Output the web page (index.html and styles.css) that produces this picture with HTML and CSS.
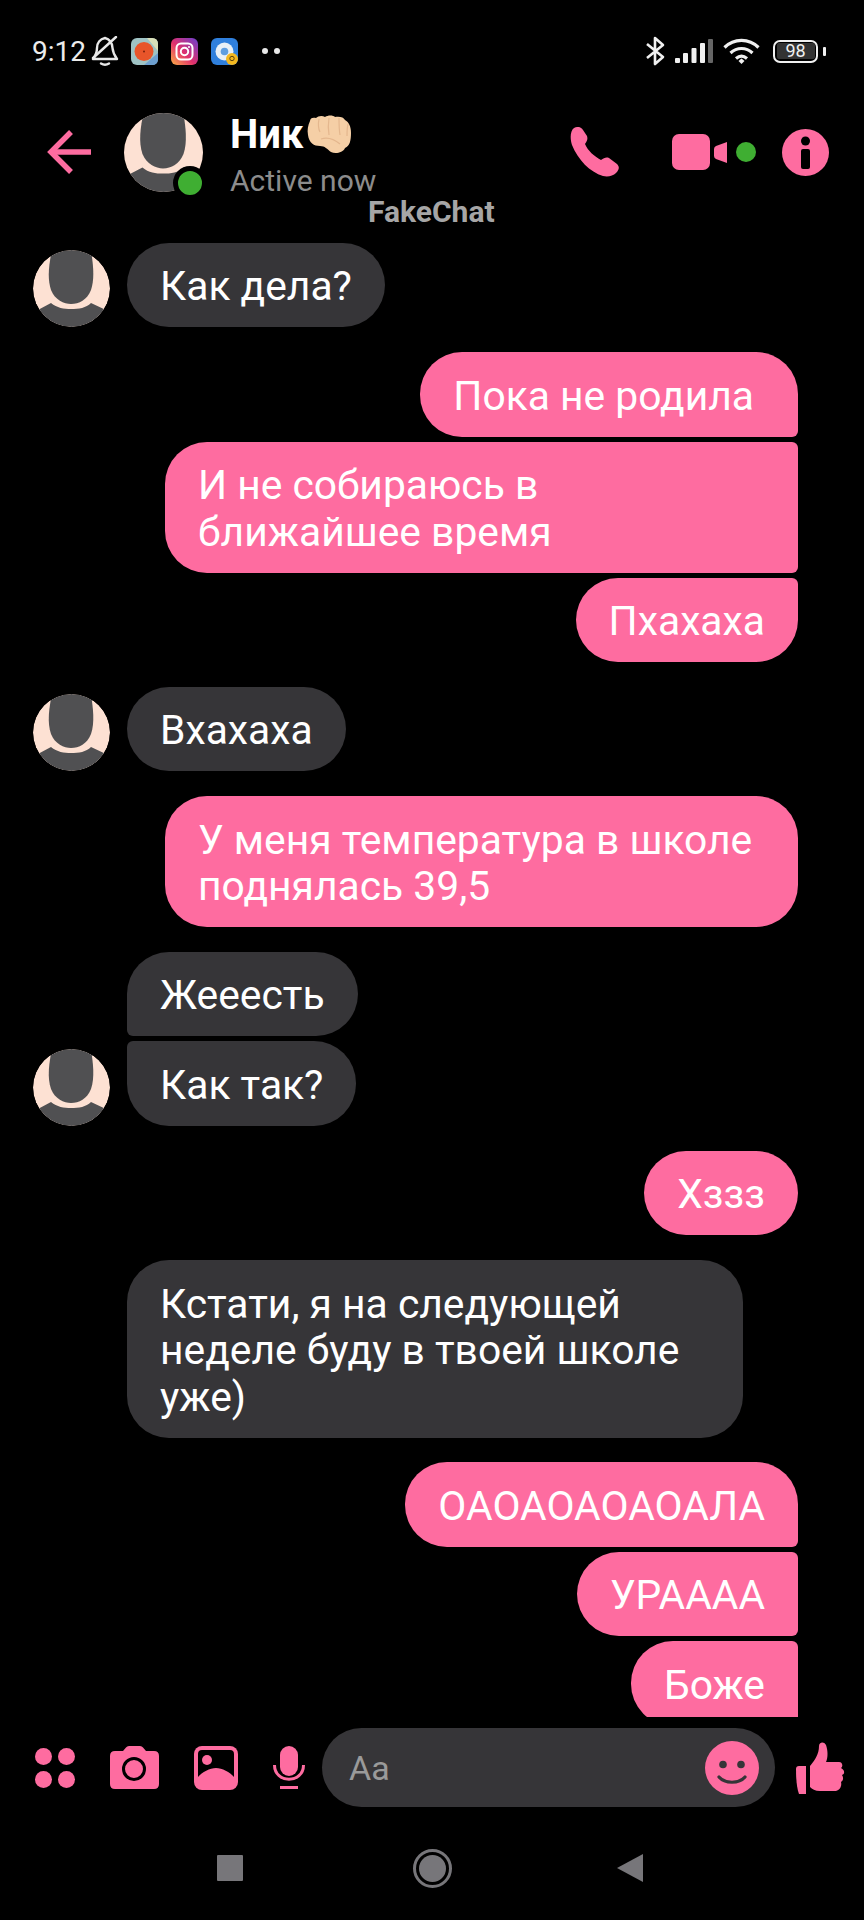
FILE: index.html
```html
<!DOCTYPE html>
<html lang="ru">
<head>
    <meta charset="UTF-8">
    <meta name="viewport" content="width=device-width, initial-scale=1.0">
    <title>FakeChat</title>
    <link rel="stylesheet" href="styles.css">
</head>
<body>
    <svg class="defs" width="0" height="0">
        <defs>
            <clipPath id="faceClip"><circle cx="38.5" cy="38.5" r="38.5"/></clipPath>
            <symbol id="face" viewBox="0 0 77 77">
                <g clip-path="url(#faceClip)">
                    <rect width="77" height="77" fill="#fde1d3"/>
                    <path d="M19 0C16 14 14 28 18 40C22 50 31 54 38 54C46 54 54 50 58 40C62 28 60 14 58 0Z" fill="#505052"/>
                    <path d="M3 61L18 53C24 58 31 59 38 59C46 59 53 58 58 53L75 61V77H3Z" fill="#505052"/>
                </g>
            </symbol>
        </defs>
    </svg>

    <div class="status-bar">
        <span class="time">9:12</span>
        <svg class="bell" width="28" height="30" viewBox="0 0 28 30" fill="none" stroke="#e8e8e8" stroke-width="2.4" stroke-linecap="round" stroke-linejoin="round">
            <path d="M2 23H26C23 19 22 17 21.500 12C21 6 18 3 14 2C9 3 6 7 6 12C6 17 5 19 2 23Z"/>
            <path d="M10 27.500Q14 30 18 27.500"/>
            <path d="M2 22L25 1"/>
        </svg>
        <div class="app-icons">
            <svg width="27" height="27" viewBox="0 0 27 27">
                <rect width="27" height="27" rx="6" fill="#9fc3c4"/>
                <path d="M16 0H21Q27 0 27 6V13Z" fill="#d8dfb8"/>
                <path d="M13 27H21Q27 27 27 21V15Z" fill="#6d9fd0"/>
                <circle cx="13" cy="13.500" r="9.500" fill="#e8552a"/>
                <circle cx="13" cy="13.500" r="1" fill="#7a1f0c"/>
            </svg>
            <svg width="27" height="27" viewBox="0 0 27 27">
                <defs>
                    <linearGradient id="instaGrad" x1="0" y1="1" x2="1" y2="0">
                        <stop offset="0" stop-color="#fcb045"/>
                        <stop offset="0.45" stop-color="#e1306c"/>
                        <stop offset="1" stop-color="#6a3fd0"/>
                    </linearGradient>
                </defs>
                <rect width="27" height="27" rx="6" fill="url(#instaGrad)"/>
                <rect x="5.500" y="5.500" width="16" height="16" rx="4.500" fill="none" stroke="#fff" stroke-width="2"/>
                <circle cx="13.500" cy="13.500" r="3.700" fill="none" stroke="#fff" stroke-width="2"/>
                <circle cx="18" cy="9" r="1" fill="#fff"/>
            </svg>
            <svg width="27" height="27" viewBox="0 0 27 27">
                <rect width="27" height="27" rx="6" fill="#2f7fdc"/>
                <circle cx="13.500" cy="13.500" r="9" fill="#e9f0f6"/>
                <circle cx="13.500" cy="13.500" r="3.800" fill="#5f9ee0"/>
                <circle cx="21" cy="21" r="6" fill="#f4b81f"/>
                <circle cx="21" cy="20.500" r="2.200" fill="none" stroke="#5a4210" stroke-width="1"/>
            </svg>
        </div>
        <div class="more-dots"><i></i><i></i></div>
        <div class="status-right">
            <svg width="20" height="30" viewBox="0 0 20 30" fill="none" stroke="#f0f0f0" stroke-width="2.600" stroke-linejoin="round">
                <path d="M2 8L18 21L10 28V2L18 9L2 22"/>
            </svg>
            <svg width="38" height="24" viewBox="0 0 38 24">
                <rect x="0" y="19" width="5" height="5" rx="1" fill="#f0f0f0"/>
                <rect x="8" y="14" width="5" height="10" rx="1" fill="#f0f0f0"/>
                <rect x="16.500" y="9" width="5" height="15" rx="1" fill="#f0f0f0"/>
                <rect x="25" y="4" width="5" height="20" rx="1" fill="#f0f0f0"/>
                <rect x="33" y="0" width="5" height="24" rx="1" fill="#666"/>
            </svg>
            <svg width="37" height="27" viewBox="0 0 37 27" fill="none" stroke="#f0f0f0" stroke-width="3.200">
                <path d="M1.500 9.500C11 0 26 0 35.500 9.500"/>
                <path d="M7.500 15C14 9 23 9 29.500 15"/>
                <path d="M13 20.500C16.500 17.500 20.500 17.500 24 20.500"/>
                <path d="M15.500 23L18.500 20.500L21.500 23L18.500 26Z" fill="#f0f0f0" stroke="none"/>
            </svg>
            <div class="battery">
                <div class="battery-body"><span>98</span></div>
                <div class="battery-tip"></div>
            </div>
        </div>
    </div>

    <div class="chat-header">
        <svg class="back" width="44" height="44" viewBox="0 0 44 44" fill="none" stroke="#fe6ca0" stroke-width="5.500">
            <path d="M44 22H4"/>
            <path d="M24 2L4 22L24 42"/>
        </svg>
        <div class="head-avatar">
            <svg width="79" height="79"><use href="#face"/></svg>
            <div class="online"></div>
        </div>
        <div class="head-text">
            <div class="head-name">
                <span>Ник</span>
                <svg width="45" height="39" viewBox="0 0 45 39">
                    <path d="M3 6C3 3 6 2 9 3C11 1 15 0 18 2C21 0 26 0 28 2C32 1 37 2 38 5C42 7 44 12 44 18C44 25 43 31 38 33C36 38 28 39 24 37C20 34 18 31 13 31C7 31 2 28 1 20C0 15 1 10 3 6Z" fill="#f5cfa6"/>
                    <path d="M12 4C11 9 11 13 13 17M22 3C21 9 21 14 22 20M32 3C32 9 32 14 33 20M41 9C40 13 40 17 40 21M14 24C20 22 27 24 33 29" fill="none" stroke="#e4b78e" stroke-width="1.200"/>
                </svg>
            </div>
            <div class="head-active">Active now</div>
        </div>
        <div class="head-actions">
            <svg class="phone" width="50" height="50" viewBox="0 0 50 50">
                <path d="M4 1C8 -1 11 0 13 3L17 9C18 12 17 14 15 17C18 24 24 29 31 33C34 31 36 30 39 31L47 37C50 40 49 43 46 46C43 49 38 50 33 49C20 45 8 33 2 18C0 12 0 4 4 1Z" fill="#fe6ca0"/>
            </svg>
            <svg class="video" width="55" height="36" viewBox="0 0 55 36">
                <rect width="38" height="36" rx="7" fill="#fe6ca0"/>
                <path d="M42 15Q42 13 44 12L55 8V29L44 25Q42 24 42 22Z" fill="#fe6ca0"/>
            </svg>
            <div class="green-dot"></div>
            <svg class="info" width="47" height="47" viewBox="0 0 47 47">
                <circle cx="23.500" cy="23.500" r="23.500" fill="#fe6ca0"/>
                <circle cx="23.500" cy="12" r="4.500" fill="#000"/>
                <rect x="19" y="20" width="9" height="20" rx="2" fill="#000"/>
            </svg>
        </div>
    </div>
    <div class="watermark">FakeChat</div>

    <div class="messages">
        <div class="row in group-start">
            <svg class="avatar" width="77" height="77"><use href="#face"/></svg>
            <div class="bubble">Как дела?</div>
        </div>

        <div class="row out group-start">
            <div class="bubble first slack">Пока не родила</div>
        </div>
        <div class="row out">
            <div class="bubble middle wide">И не собираюсь в ближайшее время</div>
        </div>
        <div class="row out">
            <div class="bubble last">Пхахаха</div>
        </div>

        <div class="row in group-start">
            <svg class="avatar" width="77" height="77"><use href="#face"/></svg>
            <div class="bubble">Вхахаха</div>
        </div>

        <div class="row out group-start">
            <div class="bubble wide">У меня температура в школе поднялась 39,5</div>
        </div>

        <div class="row in group-start">
            <div class="avatar-gap"></div>
            <div class="bubble first">Жееесть</div>
        </div>
        <div class="row in">
            <svg class="avatar" width="77" height="77"><use href="#face"/></svg>
            <div class="bubble last">Как так?</div>
        </div>

        <div class="row out group-start">
            <div class="bubble">Хззз</div>
        </div>

        <div class="row in group-start">
            <div class="avatar-gap"></div>
            <div class="bubble long">Кстати, я на следующей неделе буду в твоей школе уже)</div>
        </div>

        <div class="row out group-start">
            <div class="bubble first">ОАОАОАОАОАЛА</div>
        </div>
        <div class="row out">
            <div class="bubble middle">УРАААА</div>
        </div>
        <div class="row out">
            <div class="bubble middle">Боже</div>
        </div>
    </div>

    <div class="composer">
        <svg class="apps" width="40" height="40" viewBox="0 0 40 40" fill="#fe6ca0">
            <circle cx="8.500" cy="8.500" r="8.500"/>
            <circle cx="31.500" cy="8.500" r="8.500"/>
            <circle cx="8.500" cy="31.500" r="8.500"/>
            <circle cx="31.500" cy="31.500" r="8.500"/>
        </svg>
        <svg class="camera" width="49" height="43" viewBox="0 0 49 43">
            <path d="M5 5H13L16 1.500Q17 0 19 0H30Q32 0 33 1.500L36 5H44Q49 5 49 10V38Q49 43 44 43H5Q0 43 0 38V10Q0 5 5 5Z" fill="#fe6ca0"/>
            <circle cx="24" cy="23" r="10.500" fill="none" stroke="#000" stroke-width="3"/>
        </svg>
        <svg class="picture" width="44" height="44" viewBox="0 0 44 44">
            <rect width="44" height="44" rx="8" fill="#fe6ca0"/>
            <path d="M4 8Q4 4 8 4H36Q40 4 40 8V31C36 26 28 22 22 22C16 22 8 26 4 31Z" fill="#000"/>
            <circle cx="13" cy="14" r="5" fill="#fe6ca0"/>
        </svg>
        <svg class="mic" width="32" height="43" viewBox="0 0 32 43" fill="none" stroke="#fe6ca0" stroke-width="3">
            <rect x="7" y="0" width="18" height="30" rx="9" fill="#fe6ca0" stroke="none"/>
            <path d="M1.500 19C1.500 38 30.500 38 30.500 19"/>
            <path d="M7 41.500H25"/>
        </svg>
        <div class="text-box">
            <span class="placeholder">Aa</span>
            <svg width="54" height="54" viewBox="0 0 54 54">
                <circle cx="27" cy="27" r="27" fill="#fe6ca0"/>
                <circle cx="18" cy="23.500" r="3.800" fill="#363538"/>
                <circle cx="36" cy="23.500" r="3.800" fill="#363538"/>
                <path d="M14 36C20 43 34 43 40 36" fill="none" stroke="#363538" stroke-width="3.200" stroke-linecap="round"/>
            </svg>
        </div>
        <svg class="thumb" width="49" height="52" viewBox="0 0 49 52" fill="#fe6ca0">
            <path d="M0 27Q0 24 3 24H10V52H3Q0 44 0 27Z"/>
            <path d="M14 24C19 18 23 12 23 4C23 0 28 -1 30 3C32 9 32 15 30 20H43C47 20 47 25 45 26C49 28 49 32 46 33C48 36 47 39 45 40C46 44 44 48 40 49H24C19 49 16 47 14 45Z"/>
        </svg>
    </div>

    <div class="nav-bar">
        <div class="nav-square"></div>
        <div class="nav-circle"><div class="nav-circle-inner"></div></div>
        <div class="nav-back"></div>
    </div>
</body>
</html>
```

FILE: styles.css
```css
/* Page */
body {
    margin: 0;
    width: 864px;
    height: 1920px;
    display: flex;
    flex-direction: column;
    position: relative;
    overflow: hidden;
    background-color: #000;
    color: #fff;
    font-family: Roboto, "Noto Sans", sans-serif;
}

svg {
    display: block;
    flex: none;
}

.defs {
    position: absolute;
}

/* Status bar */
.status-bar {
    height: 96px;
    padding: 6px 38px 0 32px;
    box-sizing: border-box;
    display: flex;
    align-items: center;
    flex: none;
}

.time {
    font-size: 28px;
    color: #ececec;
    width: 59px;
}

.bell {
    margin-right: 12px;
}

.app-icons {
    display: flex;
    gap: 13px;
}

.more-dots {
    display: flex;
    gap: 6px;
    margin-left: 24px;
}

.more-dots i {
    width: 6px;
    height: 6px;
    border-radius: 50%;
    background-color: #e8e8e8;
}

.status-right {
    margin-left: auto;
    display: flex;
    align-items: center;
    gap: 10px;
}

.battery {
    display: flex;
    align-items: center;
    gap: 5px;
    margin-left: 3px;
}

.battery-body {
    width: 38px;
    height: 16px;
    padding: 1.5px;
    border: 2.5px solid #f0f0f0;
    border-radius: 7px;
    display: flex;
}

.battery-body span {
    flex: 1;
    background-color: #333;
    border-radius: 2px;
    font-size: 18px;
    line-height: 16px;
    text-align: center;
    color: #f0f0f0;
}

.battery-tip {
    width: 3px;
    height: 9px;
    background-color: #f0f0f0;
    border-radius: 1px;
}

/* Chat header */
.chat-header {
    height: 112px;
    padding: 0 35px 0 47px;
    display: flex;
    align-items: center;
    flex: none;
}

.back {
    margin-right: 33px;
}

.head-avatar {
    position: relative;
    width: 79px;
    height: 79px;
    margin-right: 27px;
}

.online {
    position: absolute;
    right: -4px;
    bottom: -8px;
    width: 24px;
    height: 24px;
    border: 5px solid #000;
    border-radius: 50%;
    background-color: #3fae32;
}

.head-text {
    display: flex;
    flex-direction: column;
    gap: 6px;
    margin-top: 7px;
}

.head-name {
    display: flex;
    align-items: center;
    gap: 4px;
    font-size: 40px;
    line-height: 44px;
    font-weight: 700;
}

.head-active {
    font-size: 30px;
    line-height: 36px;
    color: #8c8c8c;
}

.head-actions {
    margin-left: auto;
    display: flex;
    align-items: center;
}

.phone {
    margin-right: 52px;
}

.video {
    margin-right: 9px;
}

.green-dot {
    width: 20px;
    height: 20px;
    border-radius: 50%;
    background-color: #3fae32;
    margin-right: 26px;
}

.watermark {
    position: absolute;
    left: 368px;
    top: 194px;
    font-size: 30px;
    font-weight: 700;
    color: #a6a6a6;
}

/* Messages */
.messages {
    flex: 1;
    min-height: 0;
    overflow: hidden;
    padding: 15px 66px 0 33px;
    display: flex;
    flex-direction: column;
    gap: 5px;
}

.row {
    display: flex;
    align-items: flex-end;
    flex: none;
}

.row.out {
    justify-content: flex-end;
}

.row.in {
    gap: 17px;
}

.group-start {
    margin-top: 19.800px;
}

.avatar {
    border-radius: 50%;
}

.avatar-gap {
    width: 77px;
    flex: none;
}

.bubble {
    padding: 20.500px 33px 17.500px;
    font-size: 40.800px;
    line-height: 46.500px;
    border-radius: 42px;
    background-color: #363538;
    color: #fff;
}

.row.out .bubble {
    background-color: #fe6ca0;
}

.row.out .first {
    border-bottom-right-radius: 6px;
}

.row.out .middle {
    border-top-right-radius: 6px;
    border-bottom-right-radius: 6px;
}

.row.out .last {
    border-top-right-radius: 6px;
}

.row.in .first {
    border-bottom-left-radius: 6px;
}

.row.in .last {
    border-top-left-radius: 6px;
}

.row.out .slack {
    padding-right: 44px;
}

.wide {
    width: 633px;
    box-sizing: border-box;
}

.long {
    width: 616px;
    box-sizing: border-box;
}

/* Composer */
.composer {
    height: 79px;
    margin-top: 11px;
    padding: 0 19px 0 35px;
    display: flex;
    align-items: center;
    flex: none;
}

.apps {
    margin-right: 35px;
}

.camera {
    margin-right: 35px;
}

.picture {
    margin-right: 35px;
}

.mic {
    margin-right: 17px;
}

.text-box {
    width: 453px;
    height: 79px;
    box-sizing: border-box;
    padding: 0 16px 0 27px;
    border-radius: 40px;
    background-color: #363538;
    display: flex;
    align-items: center;
    justify-content: space-between;
    flex: none;
}

.placeholder {
    font-size: 34px;
    color: #9a9a9a;
}

.thumb {
    margin-left: 21px;
}

/* Android navigation */
.nav-bar {
    height: 113px;
    padding: 9px 221px 0 217px;
    box-sizing: border-box;
    display: flex;
    align-items: center;
    justify-content: space-between;
    flex: none;
}

.nav-square {
    width: 26px;
    height: 26px;
    border-radius: 1px;
    background-color: #77767a;
}

.nav-circle {
    width: 33px;
    height: 33px;
    margin-left: 4px;
    border: 3px solid #77767a;
    border-radius: 50%;
    display: flex;
    align-items: center;
    justify-content: center;
}

.nav-circle-inner {
    width: 27px;
    height: 27px;
    border-radius: 50%;
    background-color: #77767a;
}

.nav-back {
    width: 0;
    height: 0;
    border-style: solid;
    border-width: 14px 26px 14px 0;
    border-color: transparent #77767a transparent transparent;
}
```
